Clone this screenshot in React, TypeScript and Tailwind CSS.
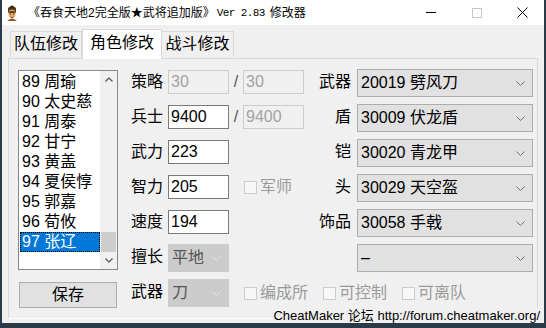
import React from "react";

const heroes = [
  "89 周瑜",
  "90 太史慈",
  "91 周泰",
  "92 甘宁",
  "93 黄盖",
  "94 夏侯惇",
  "95 郭嘉",
  "96 荀攸",
  "97 张辽",
];

function Chevron({ className }: { className?: string }) {
  return (
    <svg width="9" height="5" viewBox="0 0 9 5" className={className}>
      <polyline points="0.5,0.5 4.5,4.5 8.5,0.5" fill="none" stroke="currentColor" strokeWidth="1" />
    </svg>
  );
}

function TextBox({ value, disabled }: { value: string; disabled?: boolean }) {
  return (
    <div
      className={
        disabled
          ? "mt-px h-[24px] w-[61px] border border-[#cccccc] bg-[#f0f0f0] pl-[2px] text-[16px] leading-[22px] text-[#a3a3a3]"
          : "mt-px h-[24px] w-[61px] border border-[#7a7a7a] bg-white pl-[2px] text-[16px] leading-[22px] text-black"
      }
    >
      {value}
    </div>
  );
}

function Combo({ value, disabled, wide }: { value: string; disabled?: boolean; wide?: boolean }) {
  return (
    <div
      className={
        (wide ? "w-[176px] " : "w-[61px] ") +
        (disabled
          ? "flex h-[28px] items-center justify-between border border-[#cccccc] bg-[#cccccc] pl-[3px] pr-[7px] text-[16px] text-[#555555]"
          : "flex h-[28px] items-center justify-between border border-[#adadad] bg-[#e1e1e1] pl-[3px] pr-[7px] text-[16px] text-black")
      }
    >
      <span className="leading-[22px]">{value}</span>
      <Chevron className={disabled ? "text-[#e6e6e6]" : "text-[#707070]"} />
    </div>
  );
}

function Check({ label }: { label: string }) {
  return (
    <div className="flex items-center gap-[3px] text-[16px] text-[#9a9a9a]">
      <div className="h-[13px] w-[13px] border border-[#cccccc] bg-[#f7f7f7]" />
      <span className="leading-[22px]">{label}</span>
    </div>
  );
}

function Label({ text, right }: { text: string; right?: boolean }) {
  return (
    <div className={right ? "pr-[6px] text-right text-[16px] leading-[26px]" : "text-[16px] leading-[26px]"}>
      {text}
    </div>
  );
}

function TitleIcon() {
  return (
    <svg width="16" height="16" viewBox="0 0 16 16">
      <path d="M4 3 Q8 -1 12 3 L12 7 L4 7 Z" fill="#5a3a1a" />
      <circle cx="8" cy="2" r="1.6" fill="#3a2410" />
      <ellipse cx="8" cy="9" rx="3.6" ry="4.2" fill="#e8b070" />
      <path d="M4.4 7 Q8 5 11.6 7 L11.6 8 L4.4 8 Z" fill="#5a3a1a" />
      <rect x="5.8" y="8.6" width="1.2" height="1" fill="#2a1a0a" />
      <rect x="9" y="8.6" width="1.2" height="1" fill="#2a1a0a" />
      <path d="M6.5 12 Q8 13 9.5 12" stroke="#7a3a1a" strokeWidth="0.8" fill="none" />
      <path d="M3 16 Q8 11 13 16 Z" fill="#8a5a2a" />
    </svg>
  );
}

export default function App() {
  return (
    <div className="relative flex h-[328px] w-[546px] flex-col border-b-[5px] border-l-2 border-r-2 border-[#2b3a48] bg-[#f0f0f0] font-['Liberation_Sans','Noto_Sans_CJK_SC',sans-serif] text-black">
      {/* title bar */}
      <div className="flex h-[25px] items-center bg-white">
        <div className="ml-[2px] flex w-[16px] items-center">
          <TitleIcon />
        </div>
        <div className="ml-[8px] flex items-center text-[12px] leading-[16px]">
          <span>《吞食天地2完全版★武将追加版》</span>
          <span className="ml-[2px] font-['Liberation_Mono',monospace] text-[11px] tracking-[-0.6px]">Ver 2.83</span>
          <span className="ml-[5px]">修改器</span>
        </div>
        <div className="ml-auto flex h-full items-center">
          <div className="flex h-full w-[46px] items-center justify-center">
            <div className="h-px w-[10px] bg-black" />
          </div>
          <div className="flex h-full w-[46px] items-center justify-center">
            <div className="h-[10px] w-[10px] border border-[#c8c8c8]" />
          </div>
          <div className="flex h-full w-[44px] items-center justify-center">
            <svg width="11" height="11" viewBox="0 0 11 11">
              <path d="M0.5 0.5 L10.5 10.5 M10.5 0.5 L0.5 10.5" stroke="#000" strokeWidth="1" />
            </svg>
          </div>
        </div>
      </div>

      {/* tabs */}
      <div className="flex h-[33px] items-end pl-[8px]">
        <div className="mb-px h-[26px] w-[72px] border border-b-0 border-[#d9d9d9] bg-[#f0f0f0] text-center text-[16px] leading-[24px]">
          队伍修改
        </div>
        <div className="relative z-10 -mb-px h-[30px] w-[80px] border border-b-0 border-[#d9d9d9] bg-white text-center text-[16px] leading-[26px]">
          角色修改
        </div>
        <div className="mb-px h-[26px] w-[72px] border border-b-0 border-l-0 border-[#d9d9d9] bg-[#f0f0f0] text-center text-[16px] leading-[24px]">
          战斗修改
        </div>
      </div>

      {/* panel */}
      <div className="mx-[6px] flex h-[261px] border border-[#d9d9d9] border-b-white bg-[#f0f0f0] pl-[9px] pt-[10px]">
        {/* list + save */}
        <div className="mt-px flex w-[100px] flex-col">
          <div className="flex h-[200px] border border-[#828790] bg-white">
            <div className="flex flex-1 flex-col pl-px pt-px">
              {heroes.map((h) => (
                <div
                  key={h}
                  className={
                    h === "97 张辽"
                      ? "h-[20px] border border-dotted border-black bg-[#0078d7] pl-px text-[16px] leading-[18px] text-white"
                      : "h-[20px] pl-[2px] text-[16px] leading-[20px]"
                  }
                >
                  {h}
                </div>
              ))}
            </div>
            <div className="flex w-[17px] flex-col bg-[#f0f0f0]">
              <div className="flex h-[17px] items-center justify-center text-[#606060]">
                <svg width="8" height="5" viewBox="0 0 8 5">
                  <polyline points="0.5,4.5 4,1 7.5,4.5" fill="none" stroke="currentColor" strokeWidth="1.4" />
                </svg>
              </div>
              <div className="flex flex-1 flex-col justify-end">
                <div className="mx-px h-[20px] bg-[#cdcdcd]" />
              </div>
              <div className="flex h-[17px] items-center justify-center text-[#606060]">
                <svg width="8" height="5" viewBox="0 0 8 5">
                  <polyline points="0.5,0.5 4,4 7.5,0.5" fill="none" stroke="currentColor" strokeWidth="1.4" />
                </svg>
              </div>
            </div>
          </div>
          <button className="ml-px mt-[12px] h-[26px] w-[98px] border border-[#adadad] bg-[#e1e1e1] text-[16px] leading-[24px]">
            保存
          </button>
        </div>

        {/* fields */}
        <div className="ml-[13px] grid grid-cols-[37px_61px_14px_61px_53px_176px] grid-rows-[repeat(7,35px)] items-start">
          <Label text="策略" />
          <TextBox value="30" disabled />
          <div className="text-center text-[16px] leading-[26px] text-[#555555]">/</div>
          <TextBox value="30" disabled />
          <Label text="武器" right />
          <Combo value="20019 劈风刀" wide />

          <Label text="兵士" />
          <TextBox value="9400" />
          <div className="text-center text-[16px] leading-[26px] text-[#555555]">/</div>
          <TextBox value="9400" disabled />
          <Label text="盾" right />
          <Combo value="30009 伏龙盾" wide />

          <Label text="武力" />
          <TextBox value="223" />
          <div className="col-span-2" />
          <Label text="铠" right />
          <Combo value="30020 青龙甲" wide />

          <Label text="智力" />
          <TextBox value="205" />
          <div className="col-span-2 flex h-[26px] items-center pl-[15px]">
            <Check label="军师" />
          </div>
          <Label text="头" right />
          <Combo value="30029 天空盔" wide />

          <Label text="速度" />
          <TextBox value="194" />
          <div className="col-span-2" />
          <Label text="饰品" right />
          <Combo value="30058 手戟" wide />

          <Label text="擅长" />
          <Combo value="平地" disabled />
          <div className="col-span-3" />
          <Combo value="–" wide />

          <Label text="武器" />
          <Combo value="刀" disabled />
          <div className="col-span-4 flex h-[28px] items-center gap-[15px] pl-[15px]">
            <Check label="编成所" />
            <Check label="可控制" />
            <Check label="可离队" />
          </div>
        </div>
      </div>

      <div className="absolute bottom-0 right-[4px] bg-[#f0f0f0] pl-[2px] text-[13px] leading-[15px]">
        CheatMaker 论坛 http://forum.cheatmaker.org/
      </div>
    </div>
  );
}
